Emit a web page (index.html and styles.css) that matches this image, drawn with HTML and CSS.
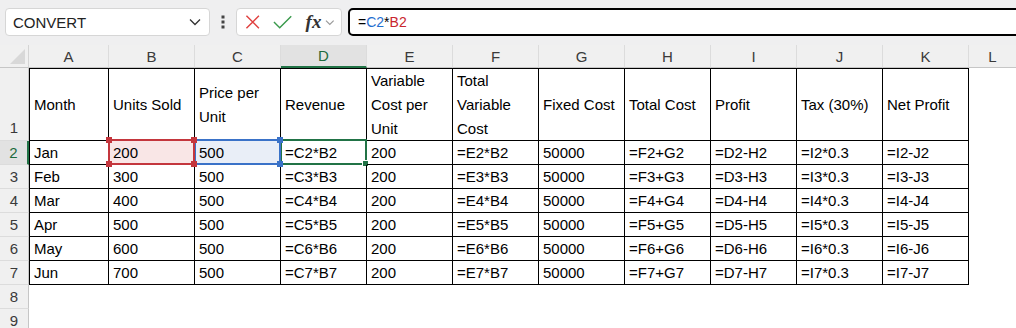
FILE: index.html
```html
<!DOCTYPE html>
<html lang="en">
<head>
    <meta charset="UTF-8">
    <title>Sheet1</title>
    <link rel="stylesheet" href="styles.css">
</head>
<body>
    <div class="toolbar">
        <div class="namebox">
            <span>CONVERT</span>
            <svg class="chev" width="12" height="8" viewBox="0 0 12 8"><path d="M1 1.5 L6 6.5 L11 1.5" fill="none" stroke="#333" stroke-width="1.3"/></svg>
        </div>
        <div class="kebab">
            <svg width="4" height="14" viewBox="0 0 4 14"><rect x="0.5" y="0.5" width="3" height="3" fill="#444"/><rect x="0.5" y="5.5" width="3" height="3" fill="#444"/><rect x="0.5" y="10.5" width="3" height="3" fill="#444"/></svg>
        </div>
        <div class="fxbox">
            <svg width="16" height="16" viewBox="0 0 16 16"><path d="M1.5 1.5 L14.5 14.5 M14.5 1.5 L1.5 14.5" stroke="#e0403f" stroke-width="1.5" fill="none"/></svg>
            <svg width="20" height="16" viewBox="0 0 20 16"><path d="M1 8 L7 14 L19 2" stroke="#3a9a4c" stroke-width="1.5" fill="none"/></svg>
            <span class="fx">fx</span>
            <svg width="10" height="7" viewBox="0 0 10 7"><path d="M1 1.5 L5 5.5 L9 1.5" fill="none" stroke="#999" stroke-width="1.2"/></svg>
        </div>
        <div class="formula">=<span class="ref-c">C2</span>*<span class="ref-b">B2</span></div>
    </div>

    <div class="sheet">
        <div class="corner"></div>
        <div class="colhead">A</div>
        <div class="colhead">B</div>
        <div class="colhead">C</div>
        <div class="colhead active">D</div>
        <div class="colhead">E</div>
        <div class="colhead">F</div>
        <div class="colhead">G</div>
        <div class="colhead">H</div>
        <div class="colhead">I</div>
        <div class="colhead">J</div>
        <div class="colhead">K</div>
        <div class="colhead last">L</div>

        <div class="rowhead first">1</div>
        <div class="cell head first-col">Month</div>
        <div class="cell head">Units Sold</div>
        <div class="cell head">Price per Unit</div>
        <div class="cell head">Revenue</div>
        <div class="cell head">Variable Cost per Unit</div>
        <div class="cell head">Total Variable Cost</div>
        <div class="cell head">Fixed Cost</div>
        <div class="cell head">Total Cost</div>
        <div class="cell head">Profit</div>
        <div class="cell head">Tax (30%)</div>
        <div class="cell head">Net Profit</div>
        <div class="blank"></div>

        <div class="rowhead active">2</div>
        <div class="cell first-col">Jan</div>
        <div class="cell ref-red">200<span class="hl red"><i class="h tl"></i><i class="h tr"></i><i class="h bl"></i><i class="h br"></i></span></div>
        <div class="cell ref-blue">500<span class="hl blue"><i class="h tr"></i><i class="h br"></i></span></div>
        <div class="cell">=C2*B2<span class="hl green"><i class="h br"></i></span></div>
        <div class="cell">200</div>
        <div class="cell">=E2*B2</div>
        <div class="cell">50000</div>
        <div class="cell">=F2+G2</div>
        <div class="cell">=D2-H2</div>
        <div class="cell">=I2*0.3</div>
        <div class="cell">=I2-J2</div>
        <div class="blank"></div>

        <div class="rowhead">3</div>
        <div class="cell first-col">Feb</div>
        <div class="cell">300</div>
        <div class="cell">500</div>
        <div class="cell">=C3*B3</div>
        <div class="cell">200</div>
        <div class="cell">=E3*B3</div>
        <div class="cell">50000</div>
        <div class="cell">=F3+G3</div>
        <div class="cell">=D3-H3</div>
        <div class="cell">=I3*0.3</div>
        <div class="cell">=I3-J3</div>
        <div class="blank"></div>

        <div class="rowhead">4</div>
        <div class="cell first-col">Mar</div>
        <div class="cell">400</div>
        <div class="cell">500</div>
        <div class="cell">=C4*B4</div>
        <div class="cell">200</div>
        <div class="cell">=E4*B4</div>
        <div class="cell">50000</div>
        <div class="cell">=F4+G4</div>
        <div class="cell">=D4-H4</div>
        <div class="cell">=I4*0.3</div>
        <div class="cell">=I4-J4</div>
        <div class="blank"></div>

        <div class="rowhead">5</div>
        <div class="cell first-col">Apr</div>
        <div class="cell">500</div>
        <div class="cell">500</div>
        <div class="cell">=C5*B5</div>
        <div class="cell">200</div>
        <div class="cell">=E5*B5</div>
        <div class="cell">50000</div>
        <div class="cell">=F5+G5</div>
        <div class="cell">=D5-H5</div>
        <div class="cell">=I5*0.3</div>
        <div class="cell">=I5-J5</div>
        <div class="blank"></div>

        <div class="rowhead">6</div>
        <div class="cell first-col">May</div>
        <div class="cell">600</div>
        <div class="cell">500</div>
        <div class="cell">=C6*B6</div>
        <div class="cell">200</div>
        <div class="cell">=E6*B6</div>
        <div class="cell">50000</div>
        <div class="cell">=F6+G6</div>
        <div class="cell">=D6-H6</div>
        <div class="cell">=I6*0.3</div>
        <div class="cell">=I6-J6</div>
        <div class="blank"></div>

        <div class="rowhead">7</div>
        <div class="cell first-col">Jun</div>
        <div class="cell">700</div>
        <div class="cell">500</div>
        <div class="cell">=C7*B7</div>
        <div class="cell">200</div>
        <div class="cell">=E7*B7</div>
        <div class="cell">50000</div>
        <div class="cell">=F7+G7</div>
        <div class="cell">=D7-H7</div>
        <div class="cell">=I7*0.3</div>
        <div class="cell">=I7-J7</div>
        <div class="blank"></div>

        <div class="rowhead">8</div>
        <div class="blank wide"></div>
        <div class="rowhead">9</div>
        <div class="blank wide"></div>
    </div>
</body>
</html>
```

FILE: styles.css
```css
body {
    margin: 0;
    font-family: "Liberation Sans", Arial, sans-serif;
    font-size: 15px;
    color: #000;
    background: #fff;
    overflow: hidden;
}
.toolbar {
    display: flex;
    align-items: center;
    height: 45px;
    padding: 0 0 1px 5px;
    box-sizing: border-box;
    background: #efeff0;
}
.namebox {
    display: flex;
    align-items: center;
    justify-content: space-between;
    width: 205px;
    height: 28px;
    box-sizing: border-box;
    padding: 0 8px 0 7px;
    background: #fff;
    border: 1px solid #d6d6d6;
    border-radius: 4px;
    color: #222;
}
.kebab {
    display: flex;
    align-items: center;
    justify-content: center;
    width: 26px;
}
.fxbox {
    display: flex;
    align-items: center;
    gap: 13px;
    width: 106px;
    height: 28px;
    box-sizing: border-box;
    padding: 0 6px 0 8px;
    background: #fff;
    border: 1px solid #d6d6d6;
    border-radius: 4px;
}
.fxbox .fx {
    font-family: "Liberation Serif", "Times New Roman", serif;
    font-style: italic;
    font-weight: bold;
    font-size: 19px;
    color: #333;
    margin-right: -9px;
}
.formula {
    flex: 1;
    margin-left: 6px;
    margin-right: -20px;
    height: 28px;
    box-sizing: border-box;
    border: 2px solid #000;
    border-radius: 5px;
    background: #fff;
    padding-left: 8px;
    font-size: 14px;
    line-height: 24px;
}
.ref-c {
    color: #1f6fd0;
}
.ref-b {
    color: #c8262e;
}
.sheet {
    display: grid;
    grid-template-columns: 29px 80px repeat(10, 86px) 1fr;
    grid-template-rows: 23px 73px repeat(8, 24px);
}
.corner {
    position: relative;
    background: #f0f0f0;
    border-right: 1px solid #d4d4d4;
    border-bottom: 1px solid #c6c6c6;
}
.corner::after {
    content: "";
    position: absolute;
    right: 3px;
    bottom: 3px;
    border-style: solid;
    border-width: 0 0 15px 15px;
    border-color: transparent transparent #d8d8d8 transparent;
}
.colhead {
    display: flex;
    align-items: center;
    justify-content: center;
    background: #f0f0f0;
    color: #3a3a3a;
    border-right: 1px solid #dcdcdc;
    border-bottom: 1px solid #c6c6c6;
}
.colhead.active {
    background: #e2e2e2;
    color: #1d6b3c;
    border-bottom: 2px solid #217346;
}
.colhead.last {
    border-right: 0;
}
.rowhead {
    display: flex;
    align-items: center;
    justify-content: center;
    background: #f0f0f0;
    color: #3a3a3a;
    border-right: 1px solid #c6c6c6;
    border-bottom: 1px solid #dcdcdc;
}
.rowhead.first {
    align-items: flex-end;
    line-height: 24px;
}
.rowhead.active {
    background: #e2e2e2;
    color: #1d6b3c;
    border-right: 2px solid #217346;
}
.cell {
    position: relative;
    display: flex;
    align-items: center;
    padding-left: 4px;
    line-height: 24px;
    white-space: nowrap;
    border-right: 1px solid #000;
    border-bottom: 1px solid #000;
}
.cell.head {
    white-space: normal;
    border-top: 1px solid #000;
}
.cell.first-col {
    border-left: 1px solid #000;
}
.blank.wide {
    grid-column: 2 / -1;
}
.ref-red {
    background: #f9e6e6;
}
.ref-blue {
    background: #e9eef7;
}
.hl {
    position: absolute;
    top: -2px;
    left: -1px;
    right: -1px;
    bottom: -1px;
    border: 2px solid;
    pointer-events: none;
}
.hl.red {
    border-color: #c4363d;
    z-index: 2;
}
.hl.blue {
    border-color: #3a72c8;
    z-index: 1;
}
.hl.green {
    border-color: #217346;
    left: -1px;
}
.h {
    position: absolute;
    width: 6px;
    height: 6px;
    background: inherit;
}
.red .h {
    background: #c4363d;
}
.blue .h {
    background: #3a72c8;
}
.green .h {
    background: #217346;
    border: 1px solid #fff;
    width: 5px;
    height: 5px;
}
.h.tl {
    top: -4px;
    left: -4px;
}
.h.tr {
    top: -4px;
    right: -4px;
}
.h.bl {
    bottom: -4px;
    left: -4px;
}
.h.br {
    bottom: -4px;
    right: -4px;
}
```
